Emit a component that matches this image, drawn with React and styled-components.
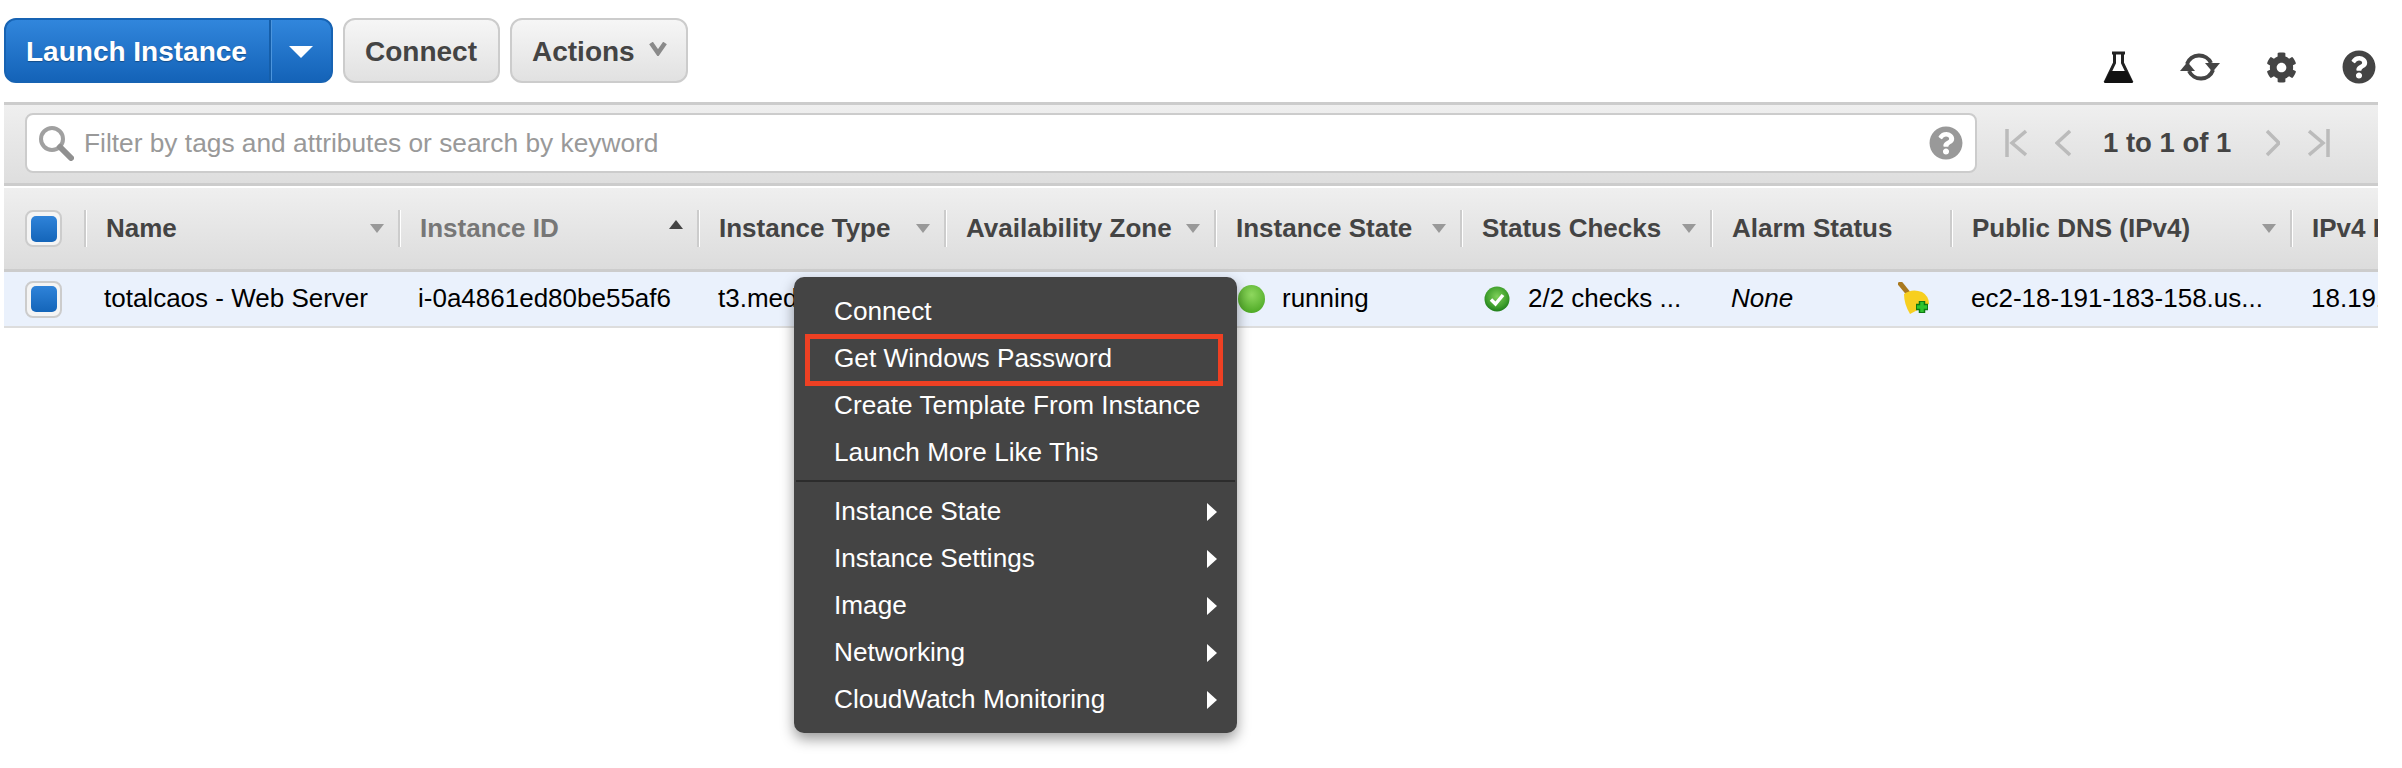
import React from "react";
import styled, { createGlobalStyle } from "styled-components";
import { FaCog, FaQuestionCircle } from "react-icons/fa";

const COLUMNS = "80px 314px 299px 247px 270px 246px 250px 240px 340px 88px";

const headers = [
  { label: "Name", caret: "down" },
  { label: "Instance ID", caret: "up", sorted: true },
  { label: "Instance Type", caret: "down" },
  { label: "Availability Zone", caret: "down" },
  { label: "Instance State", caret: "down" },
  { label: "Status Checks", caret: "down" },
  { label: "Alarm Status" },
  { label: "Public DNS (IPv4)", caret: "down" },
  { label: "IPv4 Public IP" },
];

const menuTop = ["Connect", "Get Windows Password", "Create Template From Instance", "Launch More Like This"];
const menuBottom = ["Instance State", "Instance Settings", "Image", "Networking", "CloudWatch Monitoring"];

const App = () => {
  return (
    <Page>
      <GlobalStyle />
      <Toolbar>
        <SplitButton>
          <SplitLabel>Launch Instance</SplitLabel>
          <SplitCaret>
            <svg width="24" height="12" viewBox="0 0 24 12">
              <polygon points="0,0 24,0 12,12" fill="#fff" />
            </svg>
          </SplitCaret>
        </SplitButton>
        <GreyButton $width={157}>Connect</GreyButton>
        <GreyButton $width={178}>
          Actions
          <ActionsChevron width="18" height="14" viewBox="0 0 18 14">
            <path d="M2 1 L9 11 L16 1" fill="none" stroke="#8a8a8a" strokeWidth="4.500" />
          </ActionsChevron>
        </GreyButton>
        <ToolIcons>
          <svg width="31" height="32" viewBox="0 0 31 32">
            <path d="M9 2 H22 M11.5 2 V12 L3 29.5 H28 L19.5 12 V2" fill="none" stroke="#222" strokeWidth="3" />
            <polygon points="7,20 24,20 30,32 1,32" fill="#111" />
          </svg>
          <svg width="42" height="32" viewBox="0 0 42 32">
            <path d="M8 13 A13 13 0 0 1 32 12" fill="none" stroke="#444" strokeWidth="4" />
            <polygon points="26,12 41,12 33.5,21" fill="#444" />
            <path d="M34 19 A13 13 0 0 1 10 20" fill="none" stroke="#444" strokeWidth="4" />
            <polygon points="1,20 16,20 8.5,11" fill="#444" />
          </svg>
          <FaCog size={31} color="#444" />
          <FaQuestionCircle size={34} color="#444" />
        </ToolIcons>
      </Toolbar>

      <FilterBar>
        <SearchBox>
          <svg width="36" height="36" viewBox="0 0 36 36">
            <circle cx="14" cy="14" r="11" fill="none" stroke="#a0a0a0" strokeWidth="4" />
            <path d="M22 22 L33 33" stroke="#909090" strokeWidth="6" strokeLinecap="round" />
          </svg>
          <Placeholder>Filter by tags and attributes or search by keyword</Placeholder>
          <FaQuestionCircle size={34} color="#999" />
        </SearchBox>
        <Pager>
          <svg width="22" height="28" viewBox="0 0 22 28">
            <path d="M2 0 V28 M21 2 L7 14 L21 26" fill="none" stroke="#bbb" strokeWidth="3.500" />
          </svg>
          <svg width="16" height="28" viewBox="0 0 16 28">
            <path d="M15 2 L2 14 L15 26" fill="none" stroke="#bbb" strokeWidth="3.500" />
          </svg>
          <PageCount>1 to 1 of 1</PageCount>
          <svg width="14" height="28" viewBox="0 0 14 28">
            <path d="M1 2 L13 14 L1 26" fill="none" stroke="#bbb" strokeWidth="3.500" />
          </svg>
          <svg width="22" height="28" viewBox="0 0 22 28">
            <path d="M20 0 V28 M1 2 L15 14 L1 26" fill="none" stroke="#bbb" strokeWidth="3.500" />
          </svg>
        </Pager>
      </FilterBar>

      <HeaderRow>
        <CheckCell>
          <CheckBox>
            <CheckFill />
          </CheckBox>
        </CheckCell>
        {headers.map((header) => (
          <HeaderCell key={header.label}>
            <HeaderInner>
              <HeaderLabel $sorted={header.sorted}>{header.label}</HeaderLabel>
              {header.caret && <Caret $dir={header.caret} />}
            </HeaderInner>
          </HeaderCell>
        ))}
      </HeaderRow>

      <BodyRow>
        <CheckCell>
          <CheckBox>
            <CheckFill />
          </CheckBox>
        </CheckCell>
        <Cell $indent={20}>totalcaos - Web Server</Cell>
        <Cell $indent={20}>i-0a4861ed80be55af6</Cell>
        <Cell>t3.medium</Cell>
        <Cell>us-east-2c</Cell>
        <Cell $indent={24} $gap={17}>
          <StateDot />
          running
        </Cell>
        <Cell $indent={24} $gap={18}>
          <svg width="26" height="26" viewBox="0 0 26 26">
            <defs>
              <radialGradient id="checkGreen" cx="50%" cy="40%" r="60%">
                <stop offset="0%" stopColor="#7fd05a" />
                <stop offset="70%" stopColor="#3f9f2c" />
                <stop offset="100%" stopColor="#1f7d1a" />
              </radialGradient>
            </defs>
            <circle cx="13" cy="13" r="12.5" fill="url(#checkGreen)" />
            <path d="M7 13.500 L11.500 18 L19 9" fill="none" stroke="#fff" strokeWidth="3.500" />
          </svg>
          2/2 checks ...
        </Cell>
        <AlarmCell>
          <em>None</em>
          <svg width="32" height="33" viewBox="0 0 32 33">
            <path d="M1 0 L10 11" stroke="#a9791f" strokeWidth="5" />
            <path d="M6 12 Q14 6 24 10 Q31 14 31 22 L12 32 Q6 22 6 12 Z" fill="#f7cf1f" />
            <path d="M24 19 V31 M18 25 H30" stroke="#0e7a12" strokeWidth="6.500" />
            <path d="M24 20 V30 M19 25 H29" stroke="#2fc42f" strokeWidth="3.500" />
          </svg>
        </AlarmCell>
        <Cell>ec2-18-191-183-158.us...</Cell>
        <Cell>18.191.183.158</Cell>
      </BodyRow>

      <Menu>
        {menuTop.map((item) => (
          <MenuItem key={item} $boxed={item === "Get Windows Password"}>
            {item}
          </MenuItem>
        ))}
        <MenuDivider />
        {menuBottom.map((item) => (
          <MenuItem key={item}>
            {item}
            <SubArrow />
          </MenuItem>
        ))}
      </Menu>
    </Page>
  );
};

const GlobalStyle = createGlobalStyle`
  body {
    margin: 0;
    background: #fff;
    font-family: "Liberation Sans", Arial, sans-serif;
    font-size: 26px;
  }
`;

const Page = styled.div`
  position: relative;
  width: 2374px;
  margin-left: 4px;
  overflow: hidden;
  height: 768px;
`;

const Toolbar = styled.div`
  display: flex;
  align-items: flex-start;
  gap: 10px;
  height: 102px;
  box-sizing: border-box;
  padding-top: 18px;
`;

const SplitButton = styled.div`
  display: flex;
  width: 329px;
  height: 65px;
  box-sizing: border-box;
  border: 2px solid #1763b3;
  border-radius: 12px;
  background: linear-gradient(#3186dc, #1463b8);
  color: #fff;
  font-size: 28px;
  font-weight: bold;
`;

const SplitLabel = styled.div`
  display: flex;
  align-items: center;
  width: 263px;
  box-sizing: border-box;
  padding-left: 20px;
  padding-top: 2px;
  text-shadow: 0 1px 1px rgba(0, 0, 0, 0.3);
`;

const SplitCaret = styled.div`
  flex: 1;
  display: flex;
  align-items: center;
  justify-content: center;
  padding-top: 3px;
  border-left: 2px solid #155ea9;
  box-shadow: inset 1px 0 0 #4c95dd;
`;

const GreyButton = styled.div`
  display: flex;
  align-items: center;
  gap: 14px;
  width: ${(props) => props.$width}px;
  height: 65px;
  box-sizing: border-box;
  padding-left: 20px;
  padding-top: 2px;
  border: 2px solid #ccc;
  border-radius: 12px;
  background: linear-gradient(#f6f6f6, #e1e1e1);
  color: #444;
  font-size: 28px;
  font-weight: bold;
`;

const ActionsChevron = styled.svg`
  margin-bottom: 6px;
`;

const ToolIcons = styled.div`
  display: flex;
  align-items: center;
  gap: 45px;
  margin-left: auto;
  margin-top: 32px;
  padding-right: 2px;
`;

const FilterBar = styled.div`
  display: flex;
  align-items: flex-start;
  height: 84px;
  box-sizing: border-box;
  padding: 8px 0 0 21px;
  border-top: 3px solid #ccc;
  border-bottom: 3px solid #ccc;
  background: linear-gradient(#efefef, #dedede);
`;

const SearchBox = styled.div`
  display: flex;
  align-items: center;
  width: 1952px;
  height: 60px;
  box-sizing: border-box;
  padding: 0 12px 0 11px;
  border: 2px solid #ccc;
  border-radius: 8px;
  background: #fff;
`;

const Placeholder = styled.div`
  flex: 1;
  margin-left: 10px;
  color: #999;
  font-size: 26.3px;
`;

const Pager = styled.div`
  display: flex;
  align-items: center;
  height: 60px;
  margin-left: 28px;
  gap: 28px;
`;

const PageCount = styled.div`
  margin: 0 7px 0 4px;
  color: #444;
  font-size: 27.5px;
  font-weight: bold;
  white-space: nowrap;
`;

const HeaderRow = styled.div`
  display: grid;
  grid-template-columns: ${COLUMNS};
  height: 84px;
  box-sizing: border-box;
  margin-top: 2px;
  border-bottom: 3px solid #ccc;
  background: linear-gradient(#efefef, #dcdcdc);
`;

const CheckCell = styled.div`
  display: flex;
  align-items: center;
  padding-left: 21px;
`;

const CheckBox = styled.div`
  display: flex;
  align-items: center;
  justify-content: center;
  width: 37px;
  height: 37px;
  box-sizing: border-box;
  border: 2px solid #ccc;
  border-radius: 8px;
  background: #f4f4f4;
`;

const CheckFill = styled.div`
  width: 26px;
  height: 26px;
  border-radius: 5px;
  background: linear-gradient(#2f83d9, #1465b9);
`;

const HeaderCell = styled.div`
  display: flex;
  align-items: center;
  min-width: 0;
`;

const HeaderInner = styled.div`
  display: flex;
  align-items: center;
  justify-content: space-between;
  flex: 1;
  height: 37px;
  box-sizing: border-box;
  padding: 0 14px 0 20px;
  border-left: 2px solid #ccc;
  box-shadow: inset 1px 0 0 #fff;
`;

const HeaderLabel = styled.div`
  color: ${(props) => (props.$sorted ? "#777" : "#444")};
  font-weight: bold;
  white-space: nowrap;
`;

const Caret = styled.div`
  width: 0;
  height: 0;
  border-left: 7.5px solid transparent;
  border-right: 7.5px solid transparent;
  border-top: ${(props) => (props.$dir === "down" ? "9px solid #999" : "none")};
  border-bottom: ${(props) => (props.$dir === "up" ? "9px solid #444" : "none")};
  margin-bottom: ${(props) => (props.$dir === "up" ? "8px" : "0")};
`;

const BodyRow = styled.div`
  display: grid;
  grid-template-columns: ${COLUMNS};
  height: 56px;
  box-sizing: border-box;
  border-bottom: 2px solid #ddd;
  background: #eaf1fc;
  color: #000;
`;

const Cell = styled.div`
  display: flex;
  align-items: center;
  gap: ${(props) => props.$gap || 0}px;
  padding-left: ${(props) => props.$indent || 21}px;
  padding-bottom: 1px;
  white-space: nowrap;
  overflow: hidden;
`;

const AlarmCell = styled(Cell)`
  justify-content: space-between;
  padding-right: 20px;
`;

const StateDot = styled.div`
  width: 27px;
  height: 28px;
  flex: none;
  border-radius: 50%;
  background: radial-gradient(circle at 50% 35%, #8fd85f, #3f9f18);
`;

const Menu = styled.div`
  position: absolute;
  left: 790px;
  top: 277px;
  width: 443px;
  height: 456px;
  box-sizing: border-box;
  padding-top: 11px;
  border-radius: 10px;
  background: #444;
  color: #fff;
  font-size: 26.2px;
  box-shadow: 0 6px 14px rgba(0, 0, 0, 0.4);
`;

const MenuItem = styled.div`
  position: relative;
  display: flex;
  align-items: center;
  justify-content: space-between;
  height: 47px;
  padding: 0 20px 0 40px;

  ${(props) =>
    props.$boxed &&
    `&::after {
      content: "";
      position: absolute;
      left: 11px;
      right: 14px;
      top: -1px;
      bottom: -4px;
      border: 5px solid #ee4023;
    }`}
`;

const MenuDivider = styled.div`
  height: 2px;
  margin: 4px 2px 6px;
  background: #2c2c2c;
`;

const SubArrow = styled.div`
  width: 0;
  height: 0;
  border-top: 9px solid transparent;
  border-bottom: 9px solid transparent;
  border-left: 10px solid #fff;
`;

export default App;
